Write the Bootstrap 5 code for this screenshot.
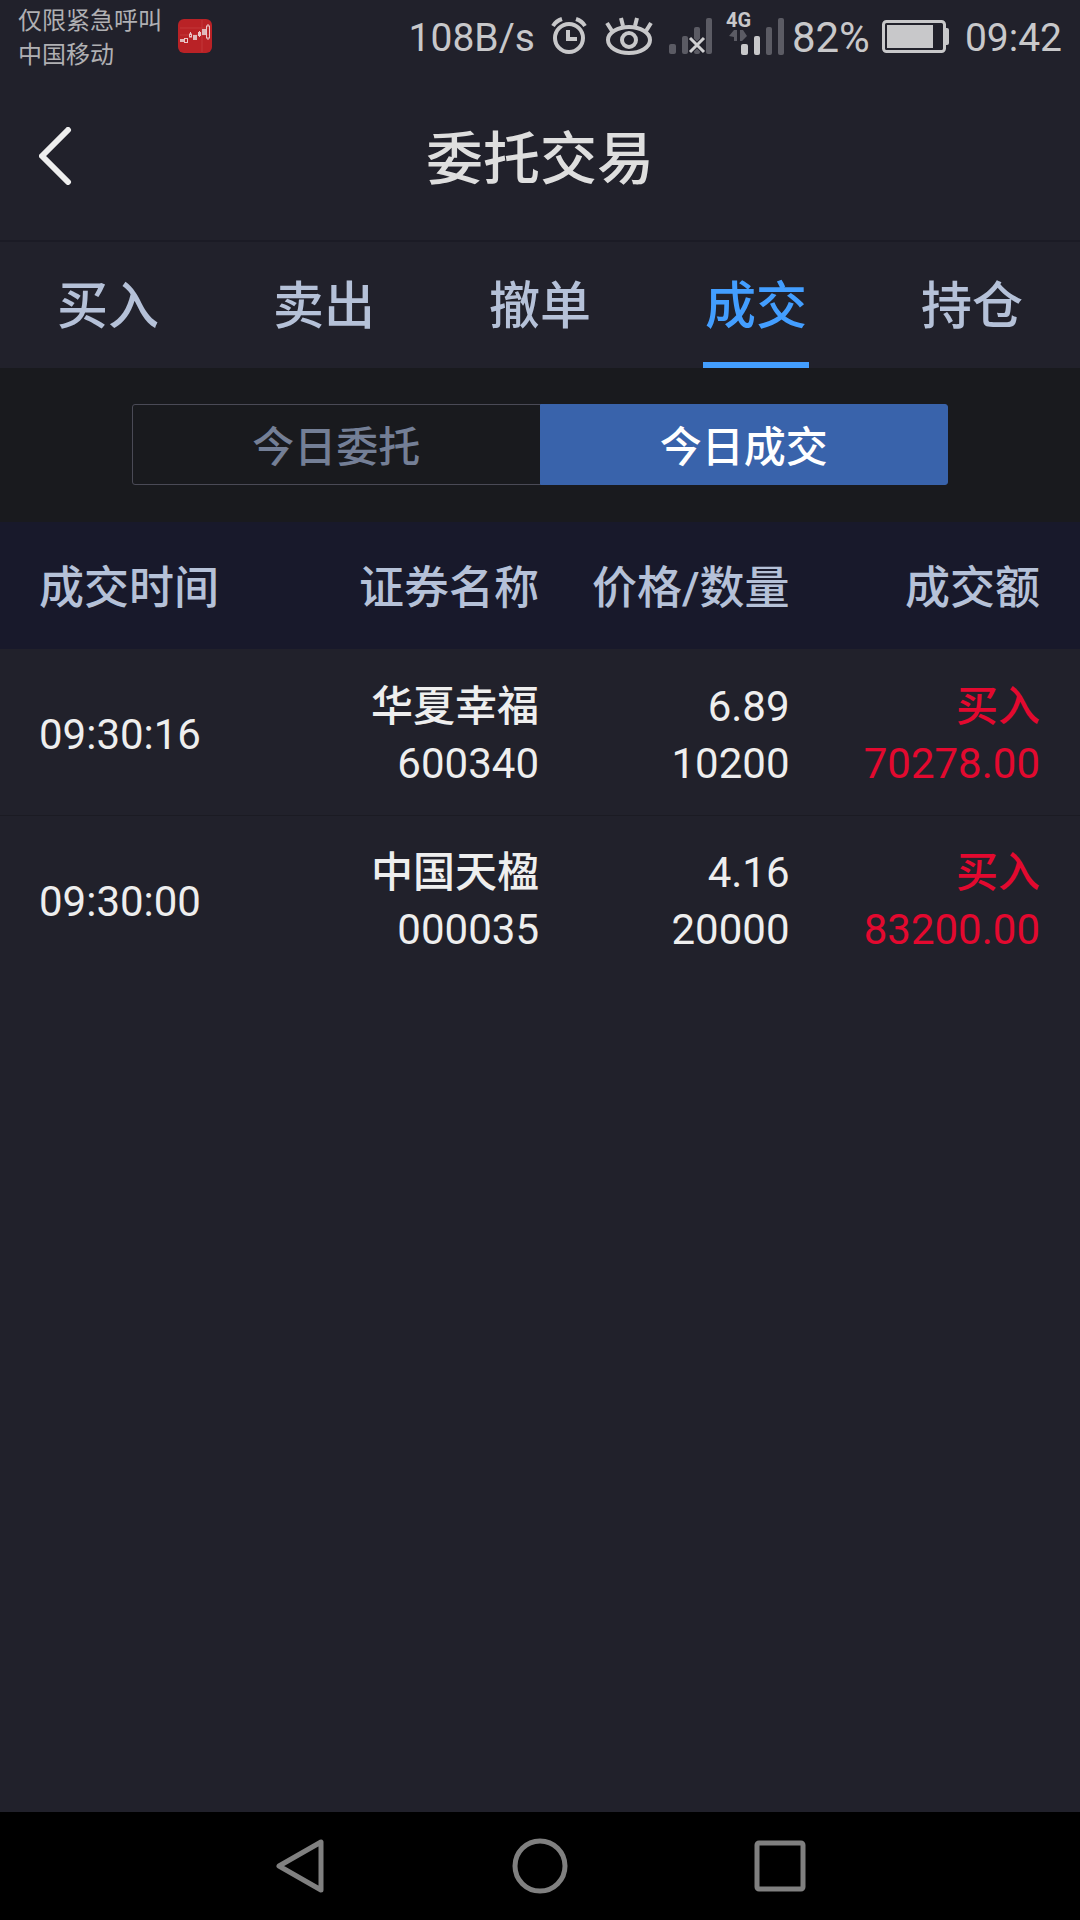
<!DOCTYPE html>
<html lang="zh-CN">
<head>
<meta charset="utf-8">
<meta name="viewport" content="width=device-width, initial-scale=1">
<title>委托交易</title>
<link rel="stylesheet" href="https://cdn.jsdelivr.net/npm/bootstrap@5.3.0/dist/css/bootstrap.min.css">
<style>
  body {
    background: #21212b;
    color: #eeeeee;
    font-family: Roboto, "Noto Sans CJK SC", sans-serif;
  }
  .status-bar { height: 72px; padding: 0 18px; color: #c8c8ca; }
  .carrier { font-size: 24px; line-height: 34px; color: #b0b0b3; }
  .status-text { font-size: 39px; line-height: 48px; }
  .status-text span { padding-top: 4px; }
  .status-text .battery-level { font-size: 42px; }
  .app-header { height: 170px; padding: 0 39px; border-bottom: 2px solid #1b1b25; }
  .app-title { padding-top: 8px; font-size: 57px; line-height: 68px; font-weight: 500; color: #dedede; }
  .back-btn { width: 80px; height: 58px; }
  .main-tabs { height: 126px; }
  .main-tabs .nav-link {
    height: 126px; padding: 25px 0 0; border-radius: 0;
    font-size: 51px; line-height: 80px; font-weight: 500; color: #b5c1d8;
  }
  .main-tabs .nav-link::after {
    content: ""; display: block; width: 106px; height: 6px; margin: 15px auto 0;
  }
  .main-tabs .nav-link.active { color: #439eff; }
  .main-tabs .nav-link.active::after { background: #439eff; }
  .switch-area { background: #191a1e; padding: 36px 132px 37px; }
  .switch-area .btn {
    --bs-btn-border-radius: 3px;
    --bs-btn-color: #747f96;
    --bs-btn-border-color: #4a4a56;
    --bs-btn-active-bg: #3963ab;
    --bs-btn-active-border-color: #3963ab;
    --bs-btn-active-color: #ffffff;
    flex: 1 1 0; height: 81px; padding: 6px 0 0; font-size: 42px; line-height: 73px; font-weight: 500;
  }
  .deals { table-layout: fixed; margin: 0; }
  .deals > :not(caption) > * > * {
    padding: 6px 0 0; background: transparent; color: #eeeeee; border: 0; vertical-align: middle;
  }
  .deals > thead > tr { height: 127px; background: #18192b; }
  .deals > thead > tr > th { font-size: 45px; line-height: 60px; font-weight: 500; color: #b5c1d8; }
  .deals > tbody > tr { height: 166px; border-bottom: 1px solid #1b1b23; }
  .deals > tbody > tr:last-child { border-bottom: 0; }
  .deals > tbody > tr > td { font-size: 42px; line-height: 57px; }
  .deals .label-text { font-weight: 500; }
  .deals > :not(caption) > * > :first-child { padding-left: 39px; }
  .deals > :not(caption) > * > :last-child { padding-right: 40px; }
  .deals > :not(caption) > * > :nth-child(2), .deals > :not(caption) > * > :nth-child(3) { padding-right: 1px; }
  .deals > tbody > tr > td.buy-side { color: #e3092f; }
  .col-quarter { width: 25%; }
  .col-price { width: 23.2%; }
  .system-nav { background: #000; height: 108px; }
  .system-nav .btn { width: 240px; height: 108px; }
</style>
<script src="https://cdn.jsdelivr.net/npm/bootstrap@5.3.0/dist/js/bootstrap.bundle.min.js" defer></script>
</head>
<body class="d-flex flex-column min-vh-100">

<div class="status-bar d-flex justify-content-between">
  <div class="d-flex">
    <div class="carrier pt-1"><div>仅限紧急呼叫</div><div>中国移动</div></div>
    <svg class="ms-3 mt-3" width="34" height="37" viewBox="0 0 34 34" preserveAspectRatio="xMidYMax" aria-hidden="true">
      <rect width="34" height="34" rx="6" fill="#b92226"/>
      <path d="M2 9H32M2 16H32M24 1V33" stroke="#cc4a4b" stroke-width="1" opacity=".5"/>
      <g fill="#dfb9ba"><rect x="2" y="20" width="4" height="3"/><rect x="15" y="16" width="4" height="5"/><rect x="24" y="10" width="4" height="6"/></g>
      <g fill="none" stroke="#ecc6c7" stroke-width="1"><rect x="6.500" y="19.500" width="3" height="4"/><rect x="11.500" y="15" width="2" height="3"/><path d="M12.500 13v2M21.500 12v6"/><rect x="20.500" y="13.500" width="2" height="3"/><rect x="28.500" y="7" width="3" height="12"/><path d="M30 5v2M30 19v2"/></g>
    </svg>
  </div>
  <div class="d-flex align-items-center status-text">
    <span>108B/s</span>
    <svg class="ms-3" width="36" height="38" viewBox="0 0 36 38" fill="none" stroke="#c8c8ca" stroke-width="4" aria-label="闹钟" role="img">
      <circle cx="18" cy="21" r="14"/><path d="M17 13v9h9"/><path d="M2 9Q5 4 11 2M34 9Q31 4 25 2"/>
    </svg>
    <svg class="ms-3" width="50" height="38" viewBox="-3 0 50 38" fill="none" stroke="#c8c8ca" stroke-width="4" aria-label="护眼模式" role="img">
      <ellipse cx="23" cy="23" rx="21" ry="13"/><circle cx="23" cy="23" r="7"/><path d="M1 6l5 8M15 1l2 8M31 1l-2 8M45 6l-5 8"/>
    </svg>
    <svg class="ms-3" width="43" height="38" viewBox="0 0 43 38" aria-label="无信号" role="img">
      <g fill="#5b5b64"><rect y="27" width="7" height="10" rx="2"/><rect x="13" y="19" width="6" height="18" rx="2"/><rect x="25" y="10" width="6" height="27" rx="2"/><rect x="37" y="1" width="6" height="36" rx="2"/></g>
      <path d="M21 21L35 35M35 21L21 35" stroke="#21212b" stroke-width="5"/>
      <path d="M21 21L35 35M35 21L21 35" stroke="#d0d0d2" stroke-width="3"/>
    </svg>
    <svg class="ms-2" width="64" height="72" viewBox="-6 0 64 72" aria-label="4G 信号" role="img">
      <text x="0" y="27" font-size="20" font-weight="700" fill="#c8c8ca">4G</text>
      <path d="M3 36L8 30H11V41H8V37ZM14 30H17L21 36L16 41H14Z" fill="#5b5b64"/>
      <g fill="#c8c8ca"><rect x="15" y="44" width="7" height="11" rx="2"/><rect x="28" y="36" width="6" height="19" rx="2"/></g>
      <g fill="#5b5b64"><rect x="40" y="27" width="6" height="28" rx="2"/><rect x="52" y="18" width="6" height="37" rx="2"/></g>
    </svg>
    <span class="ms-2 battery-level">82%</span>
    <svg class="ms-2 me-3" width="71" height="38" viewBox="-4 -3 71 38" aria-label="电量" role="img">
      <rect x="1.500" y="1.500" width="61" height="30" rx="3" fill="none" stroke="#c8c8ca" stroke-width="3"/>
      <rect x="5" y="5" width="46" height="23" fill="#c8c8ca"/><path d="M63 8h2q2 0 2 2v13q0 2-2 2h-2z" fill="#c8c8ca"/>
    </svg>
    <span>09:42</span>
  </div>
</div>

<header class="app-header d-flex align-items-center justify-content-between">
  <button type="button" class="btn p-0 border-0 back-btn text-start" aria-label="返回">
    <svg class="d-block" width="33" height="58" viewBox="0 0 33 58" fill="none" stroke="#eeeeee" stroke-width="6" stroke-linecap="round" stroke-linejoin="round"><path d="M29 3L3 29L29 55"/></svg>
  </button>
  <h1 class="app-title mb-0">委托交易</h1>
  <div class="back-btn"></div>
</header>

<nav class="nav nav-fill flex-nowrap main-tabs">
  <a class="nav-link col" href="#buy">买入</a>
  <a class="nav-link col" href="#sell">卖出</a>
  <a class="nav-link col" href="#cancel">撤单</a>
  <a class="nav-link col active" aria-current="page" href="#deals">成交</a>
  <a class="nav-link col" href="#positions">持仓</a>
</nav>

<main class="flex-grow-1">
  <div class="switch-area">
    <div class="btn-group d-flex" role="group" aria-label="今日">
      <button type="button" class="btn">今日委托</button>
      <button type="button" class="btn active" aria-pressed="true">今日成交</button>
    </div>
  </div>
  <table class="table deals text-end" id="deals">
    <colgroup><col class="col-quarter"><col class="col-quarter"><col class="col-price"><col></colgroup>
    <thead>
      <tr><th scope="col" class="text-start">成交时间</th><th scope="col">证券名称</th><th scope="col">价格/数量</th><th scope="col">成交额</th></tr>
    </thead>
    <tbody>
      <tr>
        <td class="text-start">09:30:16</td>
        <td><div class="label-text">华夏幸福</div><div>600340</div></td>
        <td><div>6.89</div><div>10200</div></td>
        <td class="buy-side"><div class="label-text">买入</div><div>70278.00</div></td>
      </tr>
      <tr>
        <td class="text-start">09:30:00</td>
        <td><div class="label-text">中国天楹</div><div>000035</div></td>
        <td><div>4.16</div><div>20000</div></td>
        <td class="buy-side"><div class="label-text">买入</div><div>83200.00</div></td>
      </tr>
    </tbody>
  </table>
</main>

<footer class="system-nav d-flex justify-content-center">
  <button type="button" class="btn p-0 border-0" aria-label="后退"><svg width="56" height="56" viewBox="0 0 56 56" fill="none" stroke="#808080" stroke-width="5" stroke-linejoin="round"><path d="M49 4V52L7 28Z"/></svg></button>
  <button type="button" class="btn p-0 border-0" aria-label="主屏幕"><svg width="56" height="56" viewBox="0 0 56 56" fill="none" stroke="#808080" stroke-width="5"><circle cx="28" cy="28" r="25"/></svg></button>
  <button type="button" class="btn p-0 border-0" aria-label="最近任务"><svg width="56" height="56" viewBox="0 0 56 56" fill="none" stroke="#808080" stroke-width="5"><rect x="5" y="5" width="46" height="46" rx="2"/></svg></button>
</footer>
</body>
</html>
